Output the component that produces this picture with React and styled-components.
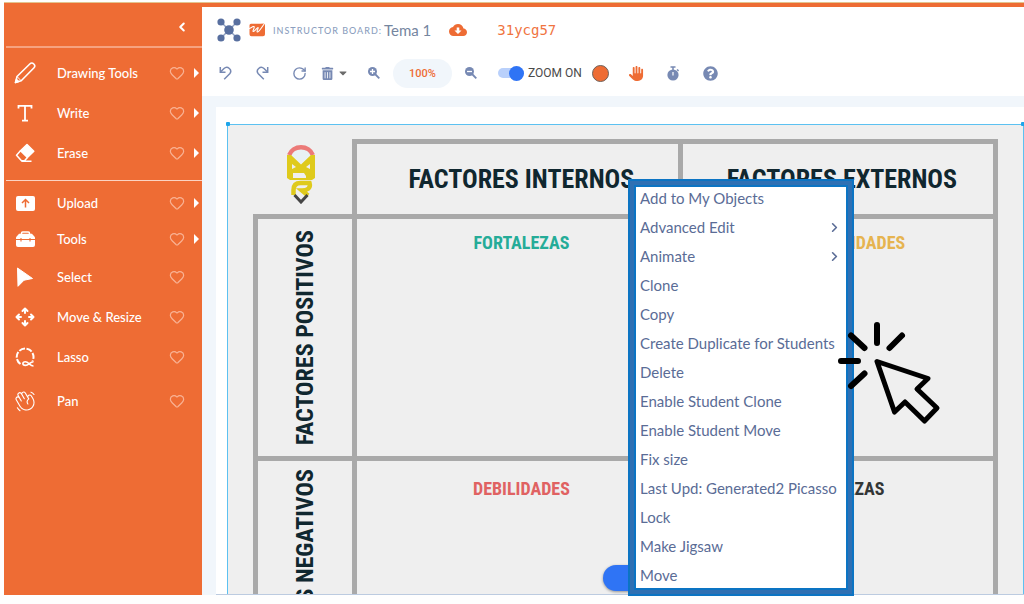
import React, { useState } from 'react'
import styled, { createGlobalStyle } from 'styled-components'
import { ChevronLeft, ChevronRight, Heart, RotateCw } from 'lucide-react'
import { FaCaretDown, FaQuestionCircle, FaTrashAlt } from 'react-icons/fa'
import { FaHand } from 'react-icons/fa6'
import { PiHandWavingLight } from 'react-icons/pi'

const GlobalStyle = createGlobalStyle`
    * {
        box-sizing: border-box;
    }

    body {
        margin: 0;
        background: #fefefe;
        font-family: Lato, "Liberation Sans", sans-serif;
    }

    button {
        border: 0;
        padding: 0;
        background: none;
        color: inherit;
        font: inherit;
        cursor: pointer;
    }

    svg {
        display: block;
    }
`

const Screen = styled.div`
    position: relative;
    display: flex;
    height: 100vh;
    padding: 3px 0 9px 4px;
    overflow: hidden;
`

const Frame = styled.div`
    display: flex;
    flex: 1;
    min-width: 0;
    border-top: 4px solid #ee6c34;
    box-shadow: 0 -1px 0 #e3c48f;
`

const Sidebar = styled.nav`
    flex: 0 0 198px;
    background: #ee6c34;
    color: white;
`

const SidebarTop = styled.div`
    display: flex;
    justify-content: flex-end;
    align-items: center;
    height: 39px;
    padding-right: 13px;
`

const Divider = styled.hr`
    margin: 0 0 0 2px;
    border: 0;
    height: ${({ $thick }) => ($thick ? '2px' : '1px')};
    background: ${({ $thick }) => ($thick ? '#f6a27f' : '#fbd3c2')};
`

const ToolGroup = styled.div`
    padding: ${({ $tight }) => ($tight ? '4px 0' : '5px 0 7px')};
`

const rowHeights = { compact: '36px', regular: '40px', tall: '48px' }

const ToolRow = styled.div`
    display: grid;
    grid-template-columns: 1fr 16px 14px;
    align-items: center;
    height: ${({ $size }) => rowHeights[$size]};
    padding: 0 3px 0 9px;
`

const ToolButton = styled.button`
    display: grid;
    grid-template-columns: 24px 1fr;
    align-items: center;
    justify-items: center;
    column-gap: 20px;
    font-size: 13px;
    font-weight: 500;
    line-height: 20px;
    text-align: left;
`

const ToolLabel = styled.span`
    justify-self: start;
    white-space: nowrap;
`

const FavButton = styled.button`
    color: #f9b294;
`

const RowCaret = styled.span`
    justify-self: end;
`

const Main = styled.main`
    display: flex;
    flex: 1;
    flex-direction: column;
    min-width: 0;
`

const Header = styled.header`
    height: 89px;
    background: white;
    padding-left: 15px;
`

const TitleBar = styled.div`
    display: flex;
    align-items: center;
    height: 46px;
`

const BoardKind = styled.span`
    margin-left: 7px;
    font-size: 9px;
    font-weight: 500;
    letter-spacing: 1px;
    color: #8d9fc0;
`

const BoardName = styled.h1`
    margin: 0 0 0 2px;
    font-size: 15px;
    font-weight: 400;
    line-height: 20px;
    color: #75869f;
`

const CloudButton = styled.button`
    margin-left: 18px;
    color: #ee6c34;
`

const SessionCode = styled.span`
    margin-left: 30px;
    font-family: "DejaVu Sans Mono", monospace;
    font-size: 14px;
    color: #f0743f;
`

const Toolbar = styled.div`
    display: flex;
    align-items: center;
    height: 40px;
`

const IconGroup = styled.div`
    display: flex;
    align-items: center;
    gap: ${({ $gap }) => $gap};
    margin-right: ${({ $after }) => $after};
`

const IconButton = styled.button`
    display: flex;
    align-items: center;
    justify-content: center;
    width: 16px;
    height: 20px;
    color: ${({ $color }) => $color || '#7789b3'};
`

const ZoomValue = styled.button`
    width: 59px;
    height: 29px;
    border-radius: 15px;
    background: #f1f6fb;
    color: #ee6c34;
    font-family: Roboto, sans-serif;
    font-size: 11px;
    font-weight: 500;
`

const SwitchLabel = styled.label`
    display: flex;
    align-items: center;
    gap: 4px;
    font-family: Roboto, sans-serif;
    font-size: 12px;
    color: #4a4a4a;
    white-space: nowrap;
`

const Switch = styled.input`
    display: flex;
    align-items: center;
    appearance: none;
    width: 26px;
    height: 10px;
    margin: 0;
    border-radius: 5px;
    background: #b9d0fb;

    &::before {
        content: '';
        width: 15px;
        height: 15px;
        border-radius: 50%;
        background: #8f9bb3;
    }

    &:checked {
        justify-content: flex-end;
    }

    &:checked::before {
        background: #2f74f5;
    }
`

const ColorButton = styled.button`
    width: 17px;
    height: 17px;
    border: 1px solid #6d625c;
    border-radius: 50%;
    background: #ee6c34;
`

const Workspace = styled.section`
    display: flex;
    flex: 1;
    min-height: 0;
    padding: 11px 0 0 14px;
    background: #f1f6fb;
`

const Paper = styled.div`
    display: flex;
    flex: 1;
    min-width: 0;
    padding: 17px 0 0 11px;
    background: white;
    border-bottom: 1px solid #bccbe0;
`

const Board = styled.div`
    position: relative;
    flex: 1;
    min-width: 0;
    padding: 14px 25px 0;
    border: 1px solid #5cc1f1;
    border-bottom: 0;
    background: #efefef;
`

const BoardClip = styled.div`
    height: 100%;
    overflow: hidden;
`

const Handle = styled.span`
    position: absolute;
    top: -3px;
    ${({ $side }) => $side}: -2px;
    width: 4px;
    height: 4px;
    border-radius: 1px;
    background: #1da5ea;
`

const Matrix = styled.table`
    width: 100%;
    table-layout: fixed;
    border-collapse: collapse;
    font-family: "Roboto Condensed", "Liberation Sans Narrow", "Liberation Sans", sans-serif;
    color: #10272f;

    th,
    td {
        padding: 0;
        border: 5px solid #a9a9a9;
    }
`

const Corner = styled.td`
    && {
        padding-right: 5px;
        border-top: 0;
        border-left: 0;
        vertical-align: top;
    }

    svg {
        margin: 0 auto;
    }
`

const ColHead = styled.th`
    && {
        padding-left: 8px;
    }

    height: 75px;
    font-size: 26px;
    line-height: 30px;
    white-space: nowrap;
`

const RowHead = styled.th`
    height: 242px;
    vertical-align: ${({ $top }) => ($top ? 'top' : 'middle')};

    span {
        display: block;
        margin: 0 auto;
        padding-bottom: ${({ $top }) => ($top ? '8px' : '0')};
        writing-mode: vertical-rl;
        transform: rotate(180deg);
        font-size: 24px;
        line-height: 30px;
        white-space: nowrap;
    }
`

const Quadrant = styled.td`
    vertical-align: top;
    text-align: center;

    h2 {
        margin: ${({ $low }) => ($low ? '13px' : '9px')} 0 0 8px;
        font-size: 18px;
        line-height: 30px;
        color: ${({ $color }) => $color};
    }
`

const FloatingPill = styled.button`
    position: absolute;
    left: 375px;
    bottom: 3px;
    width: 80px;
    height: 26px;
    border-radius: 13px;
    background: #2f74f5;
    box-shadow: 0 1px 3px rgba(0, 0, 0, .4);
`

const ContextMenu = styled.ul`
    position: absolute;
    top: 179px;
    left: 628px;
    display: flex;
    flex-direction: column;
    gap: 7px;
    width: 226px;
    margin: 0;
    padding: 2px 2px 4px;
    list-style: none;
    border: 6px solid #2f70b3;
    outline: 2px solid #0c74c3;
    outline-offset: -2px;
    background: white;
    box-shadow: inset 0 0 0 2px #0c74c3;
`

const MenuItem = styled.button`
    display: flex;
    align-items: center;
    justify-content: space-between;
    width: 100%;
    padding: 0 4px;
    font-size: 15px;
    line-height: 22px;
    color: #5a6c96;
    white-space: nowrap;
`

const Pointer = styled.svg`
    position: absolute;
    top: 320px;
    left: 836px;
    pointer-events: none;
`

const PencilIcon = () => (
  <svg width="22" height="22" viewBox="0 0 22 22" fill="none" stroke="white" strokeWidth="1.6" strokeLinejoin="round">
    <path d="M1.5 20.5l1.5-6L15.800 2a2.700 2.700 0 0 1 4 4L7.200 18.800z" />
    <path d="M3 14.500l4.200 4.300" strokeWidth="1" />
    <path d="M1.500 20.500l1-3 2 2z" fill="white" />
  </svg>
)

const TypeIcon = () => (
  <svg width="16" height="18" viewBox="0 0 16 18" fill="none" stroke="white" strokeWidth="1.8">
    <path d="M1.500 4.500V1.900h13v2.600M8 2v14.500M5 16.600h6" />
  </svg>
)

const EraserIcon = () => (
  <svg width="20" height="20" viewBox="0 0 20 20" fill="none" stroke="white" strokeWidth="1.500" strokeLinejoin="round">
    <path d="M5.500 7.800L12 1.500L18.800 8.200L12.400 14.500z" fill="white" />
    <path d="M5.500 7.800L1.500 12.200l5 5.600h3l2.900-3.300M6.500 18.300h10" />
  </svg>
)

const UploadIcon = () => (
  <svg width="19" height="15" viewBox="0 0 19 15">
    <rect width="19" height="15" rx="2" fill="white" />
    <path d="M9.500 11.500V4M6 7l3.500-3.500L13 7" fill="none" stroke="#ee6c34" strokeWidth="1.500" />
  </svg>
)

const ToolboxIcon = () => (
  <svg width="19" height="16" viewBox="0 0 19 16">
    <path d="M5.500 3V2.200A1.200 1.200 0 0 1 6.700 1h5.600a1.200 1.200 0 0 1 1.200 1.200V3" fill="none" stroke="white" strokeWidth="1.500" />
    <path d="M3 2.800h13l3 3.500V14a2 2 0 0 1-2 2H2a2 2 0 0 1-2-2V6.300z" fill="white" />
    <path d="M0 8.500h19M5 7v3.500M14 7v3.500" stroke="#ee6c34" strokeWidth="1.100" />
  </svg>
)

const SelectIcon = () => (
  <svg width="18" height="20" viewBox="0 0 18 20" fill="white" stroke="white" strokeWidth="1" strokeLinejoin="round">
    <path d="M1.500 1L16.500 11.500L8 13.200L2 19.300z" />
  </svg>
)

const MoveIcon = () => (
  <svg width="20" height="20" viewBox="0 0 20 20" fill="none" stroke="white" strokeWidth="2" strokeLinecap="round" strokeLinejoin="round">
    <path d="M10 6V2M7.500 4L10 1.500L12.500 4" />
    <path d="M10 14v4M7.500 16l2.500 2.500l2.500-2.500" />
    <path d="M6 10H2M4 7.500L1.500 10L4 12.500" />
    <path d="M14 10h4M16 7.500l2.500 2.500l-2.500 2.500" />
  </svg>
)

const LassoIcon = () => (
  <svg width="20" height="20" viewBox="0 0 20 20" fill="none" stroke="white" strokeWidth="2">
    <path d="M5.500 17A8.400 8.400 0 1 1 17.500 14" strokeDasharray="6 1.500" />
    <path d="M18.500 19c-3.500 0-5-4.200-8-4.200-3.500 0-3.500 3.600 0 3.600 3.200 0 4.500-3.600 8-3.600" strokeWidth="1.600" />
  </svg>
)

const RowArrow = () => (
  <svg width="5" height="10" viewBox="0 0 5 10" fill="white">
    <path d="M0 0l5 5-5 5z" />
  </svg>
)

const UndoIcon = ({ flip }) => (
  <svg width="13" height="14" viewBox="0 0 13 14" fill="none" stroke="currentColor" strokeWidth="1.500">
    <g transform={flip ? 'translate(13 0) scale(-1 1)' : undefined}>
      <path d="M1.300 1v5.200h5.200" />
      <path d="M1.500 6L5 2.500a3.900 3.900 0 0 1 5.700 5.300L5.200 13.200" />
    </g>
  </svg>
)

const MagnifierIcon = ({ plus }) => (
  <svg width="12" height="12" viewBox="0 0 12 12">
    <circle cx="4.500" cy="4.500" r="4.500" fill="currentColor" />
    <path d="M7 7l4.300 4.300" stroke="currentColor" strokeWidth="1.800" />
    <path d={plus ? 'M2 4.500h5M4.500 2v5' : 'M2 4.500h5'} stroke="white" strokeWidth="1.300" />
  </svg>
)

const TimerIcon = () => (
  <svg width="13" height="15" viewBox="0 0 13 15" fill="currentColor">
    <circle cx="6" cy="9" r="5.600" />
    <path d="M3.500 1h5M6 1v3M10 3.500l1.600 1.300" fill="none" stroke="currentColor" strokeWidth="1.500" />
    <path d="M6 6v3.500" stroke="white" strokeWidth="1.200" />
  </svg>
)

const CloudIcon = () => (
  <svg width="18" height="12" viewBox="0 4 24 16">
    <path d="M19.350 10.040C18.670 6.590 15.640 4 12 4 9.110 4 6.600 5.640 5.350 8.040 2.340 8.360 0 10.910 0 14c0 3.310 2.690 6 6 6h13c2.760 0 5-2.240 5-5 0-2.640-2.050-4.780-4.650-4.960z" fill="currentColor" />
    <path d="M10.300 8.500h3.400v4h3L12 17.200 7.300 12.500h3z" fill="white" />
  </svg>
)

const NodesLogo = () => (
  <svg width="24" height="24" viewBox="0 0 24 24" fill="#586f9f">
    <path d="M4 4l16 16M20 4L4 20" stroke="#8f9fc0" strokeWidth="1.500" />
    <circle cx="12" cy="12" r="4.800" />
    <circle cx="4" cy="4" r="3.600" />
    <circle cx="20" cy="4" r="3.600" />
    <circle cx="4" cy="20" r="3.600" />
    <circle cx="20" cy="20" r="3.600" />
  </svg>
)

const BoardBadge = () => (
  <svg width="17" height="14" viewBox="0 0 17 14">
    <path d="M2 .800h9L16 .500v10.700a2 2 0 0 1-2 2H2.500a2 2 0 0 1-2-2V2.300A1.500 1.500 0 0 1 2 .800z" fill="#ee6c34" />
    <path d="M0 5.500C2 5 5 2.500 5.200 4S3 8.500 4.500 8.500 8 4.500 9 4.500 7 9 8.500 9s4-4.500 7-8.500" fill="none" stroke="white" strokeWidth="1.100" strokeLinecap="round" />
  </svg>
)

// pencil mascot in the corner of the matrix
const PencilLogo = () => (
  <svg width="30" height="62" viewBox="0 0 30 62" fill="none">
    <circle cx="15" cy="14" r="10" fill="#e9f1f4" />
    <path d="M3.200 13a12.500 11.500 0 0 1 23.600 0" stroke="#ec7a78" strokeWidth="4.500" />
    <path d="M1 13h4l10 9.500L25 13h4v23l-3 2H4l-3-2z" fill="#dfca1c" />
    <path d="M6 22l4 3-4 2zM24 22l-4 3 4 2zM7 31h11l2 3v2H7z" fill="#efefef" />
    <path d="M7.500 53v-5c0-5 3-7 7-7h9c1.500 5-2 7.500-7.500 7.500l6 5" stroke="#dfca1c" strokeWidth="4.500" />
    <path d="M8.500 53l6.500 7L21.500 53" stroke="#454545" strokeWidth="3" />
  </svg>
)

const toolGroups = [
  [
    { label: 'Drawing Tools', icon: <PencilIcon />, size: 'regular', more: true },
    { label: 'Write', icon: <TypeIcon />, size: 'regular', more: true },
    { label: 'Erase', icon: <EraserIcon />, size: 'regular', more: true },
  ],
  [
    { label: 'Upload', icon: <UploadIcon />, size: 'compact', more: true },
    { label: 'Tools', icon: <ToolboxIcon />, size: 'compact', more: true },
    { label: 'Select', icon: <SelectIcon />, size: 'regular' },
    { label: 'Move & Resize', icon: <MoveIcon />, size: 'regular' },
    { label: 'Lasso', icon: <LassoIcon />, size: 'regular' },
    { label: 'Pan', icon: <PiHandWavingLight size={24} />, size: 'tall' },
  ],
]

const menuItems = [
  { label: 'Add to My Objects' },
  { label: 'Advanced Edit', more: true },
  { label: 'Animate', more: true },
  { label: 'Clone' },
  { label: 'Copy' },
  { label: 'Create Duplicate for Students' },
  { label: 'Delete' },
  { label: 'Enable Student Clone' },
  { label: 'Enable Student Move' },
  { label: 'Fix size' },
  { label: 'Last Upd: Generated2 Picasso' },
  { label: 'Lock' },
  { label: 'Make Jigsaw' },
  { label: 'Move' },
]

const Tool = ({ label, icon, size, more }) => (
  <ToolRow $size={size}>
    <ToolButton>
      {icon}
      <ToolLabel>{label}</ToolLabel>
    </ToolButton>
    <FavButton aria-label={`Favorite ${label}`}>
      <Heart size={16} strokeWidth={1.8} />
    </FavButton>
    {more && <RowCaret><RowArrow /></RowCaret>}
  </ToolRow>
)

const FactorMatrix = () => (
  <Matrix>
    <colgroup>
      <col width="13.4%" />
      <col width="44%" />
      <col width="42.6%" />
    </colgroup>
    <tbody>
      <tr>
        <Corner><PencilLogo /></Corner>
        <ColHead scope="col">FACTORES INTERNOS</ColHead>
        <ColHead scope="col">FACTORES EXTERNOS</ColHead>
      </tr>
      <tr>
        <RowHead scope="row"><span>FACTORES POSITIVOS</span></RowHead>
        <Quadrant $color="#25ac98"><h2>FORTALEZAS</h2></Quadrant>
        <Quadrant $color="#e6b450"><h2>OPORTUNIDADES</h2></Quadrant>
      </tr>
      <tr>
        <RowHead scope="row" $top><span>FACTORES NEGATIVOS</span></RowHead>
        <Quadrant $color="#e06262" $low><h2>DEBILIDADES</h2></Quadrant>
        <Quadrant $color="#333636" $low><h2>AMENAZAS</h2></Quadrant>
      </tr>
    </tbody>
  </Matrix>
)

export default function App() {
  const [zoomOn, setZoomOn] = useState(true)

  return (
    <>
      <GlobalStyle />
      <Screen>
        <Frame>
          <Sidebar>
            <SidebarTop>
              <button aria-label="Collapse">
                <ChevronLeft size={14} strokeWidth={3.5} />
              </button>
            </SidebarTop>
            <Divider $thick />
            <ToolGroup>
              {toolGroups[0].map((tool) => <Tool key={tool.label} {...tool} />)}
            </ToolGroup>
            <Divider />
            <ToolGroup $tight>
              {toolGroups[1].map((tool) => <Tool key={tool.label} {...tool} />)}
            </ToolGroup>
          </Sidebar>

          <Main>
            <Header>
              <TitleBar>
                <IconGroup $gap="8px" $after="0">
                  <NodesLogo />
                  <BoardBadge />
                </IconGroup>
                <BoardKind>INSTRUCTOR BOARD:</BoardKind>
                <BoardName>Tema 1</BoardName>
                <CloudButton aria-label="Download">
                  <CloudIcon />
                </CloudButton>
                <SessionCode>31ycg57</SessionCode>
              </TitleBar>
              <Toolbar>
                <IconGroup $gap="21px" $after="12px">
                  <IconButton aria-label="Undo"><UndoIcon /></IconButton>
                  <IconButton aria-label="Redo"><UndoIcon flip /></IconButton>
                  <IconButton aria-label="Reset"><RotateCw size={15} strokeWidth={2.2} /></IconButton>
                </IconGroup>
                <IconGroup $gap="0" $after="15px">
                  <IconButton aria-label="Delete"><FaTrashAlt size={13} /></IconButton>
                  <IconButton aria-label="Delete options" $color="#6b6b6b"><FaCaretDown size={12} /></IconButton>
                </IconGroup>
                <IconGroup $gap="11px" $after="19px">
                  <IconButton aria-label="Zoom in"><MagnifierIcon plus /></IconButton>
                  <ZoomValue>100%</ZoomValue>
                  <IconButton aria-label="Zoom out"><MagnifierIcon /></IconButton>
                </IconGroup>
                <IconGroup $gap="10px" $after="20px">
                  <SwitchLabel>
                    <Switch
                      type="checkbox"
                      checked={zoomOn}
                      onChange={(event) => setZoomOn(event.target.checked)}
                    />
                    ZOOM ON
                  </SwitchLabel>
                  <ColorButton aria-label="Color" />
                </IconGroup>
                <IconGroup $gap="21px" $after="0">
                  <IconButton aria-label="Raise hand" $color="#ee6c34"><FaHand size={15} /></IconButton>
                  <IconButton aria-label="Timer"><TimerIcon /></IconButton>
                  <IconButton aria-label="Help"><FaQuestionCircle size={15} /></IconButton>
                </IconGroup>
              </Toolbar>
            </Header>

            <Workspace>
              <Paper>
                <Board>
                  <Handle $side="left" />
                  <Handle $side="right" />
                  <BoardClip>
                    <FactorMatrix />
                  </BoardClip>
                  <FloatingPill aria-label="Add page" />
                </Board>
              </Paper>
            </Workspace>
          </Main>
        </Frame>

        <ContextMenu>
          {menuItems.map(({ label, more }) => (
            <li key={label}>
              <MenuItem>
                {label}
                {more && <ChevronRight size={15} strokeWidth={2.6} />}
              </MenuItem>
            </li>
          ))}
        </ContextMenu>

        <Pointer width="106" height="106" viewBox="0 0 106 106" fill="none" stroke="black" strokeWidth="6" strokeLinecap="round" strokeLinejoin="round">
          <path d="M41 5v18M15 15.500L28.500 28M66 15.500L53.500 28M5 41h17M28.500 53.500L15 66" />
          <path d="M41 41.500L92 58.500L81 69L101 88L88.500 101L69 82L58.500 92z" strokeWidth="5" fill="#efefef" />
        </Pointer>
      </Screen>
    </>
  )
}
